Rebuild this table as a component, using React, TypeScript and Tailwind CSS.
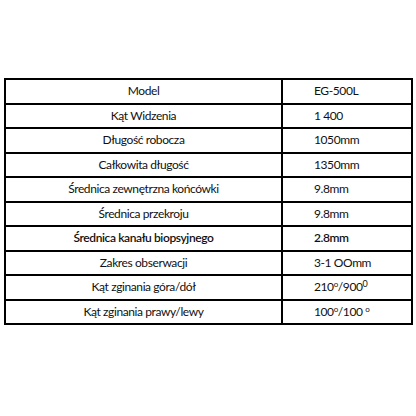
const rows: [React.ReactNode, React.ReactNode, boolean?][] = [
  ["Model", "EG-500L"],
  ["Kąt Widzenia", "1 400"],
  ["Długość robocza", "1050mm"],
  ["Całkowita długość", "1350mm"],
  ["Średnica zewnętrzna końcówki", "9.8mm"],
  ["Średnica przekroju", "9.8mm"],
  ["Średnica kanału biopsyjnego", "2.8mm", true],
  ["Zakres obserwacji", "3-1 OOmm"],
  [
    "Kąt zginania góra/dół",
    <>
      210<sup className="text-[8px]">o</sup>/900<sup className="text-[9px]">0</sup>
    </>,
  ],
  [
    "Kąt zginania prawy/lewy",
    <>
      100<sup className="text-[8px]">o</sup>/100 <sup className="text-[8px]">o</sup>
    </>,
  ],
];

export default function App() {
  return (
    <div className="w-[416px] h-[416px] bg-white pt-[78px] pl-[4px] font-['Lato',sans-serif] text-[12px] tracking-[-0.4px] text-[#111]">
      <table className="w-[409px] border-collapse border-2 border-black">
        <tbody>
          {rows.map(([label, value, bold], i) => (
            <tr key={i} className="h-[24.5px]">
              <td
                className={`w-[277px] border-2 border-black text-center align-middle leading-none ${
                  bold ? "font-semibold" : ""
                }`}
              >
                {label}
              </td>
              <td
                className={`border-2 border-black pl-[31px] align-middle leading-none ${
                  bold ? "font-semibold" : ""
                }`}
              >
                {value}
              </td>
            </tr>
          ))}
        </tbody>
      </table>
    </div>
  );
}
